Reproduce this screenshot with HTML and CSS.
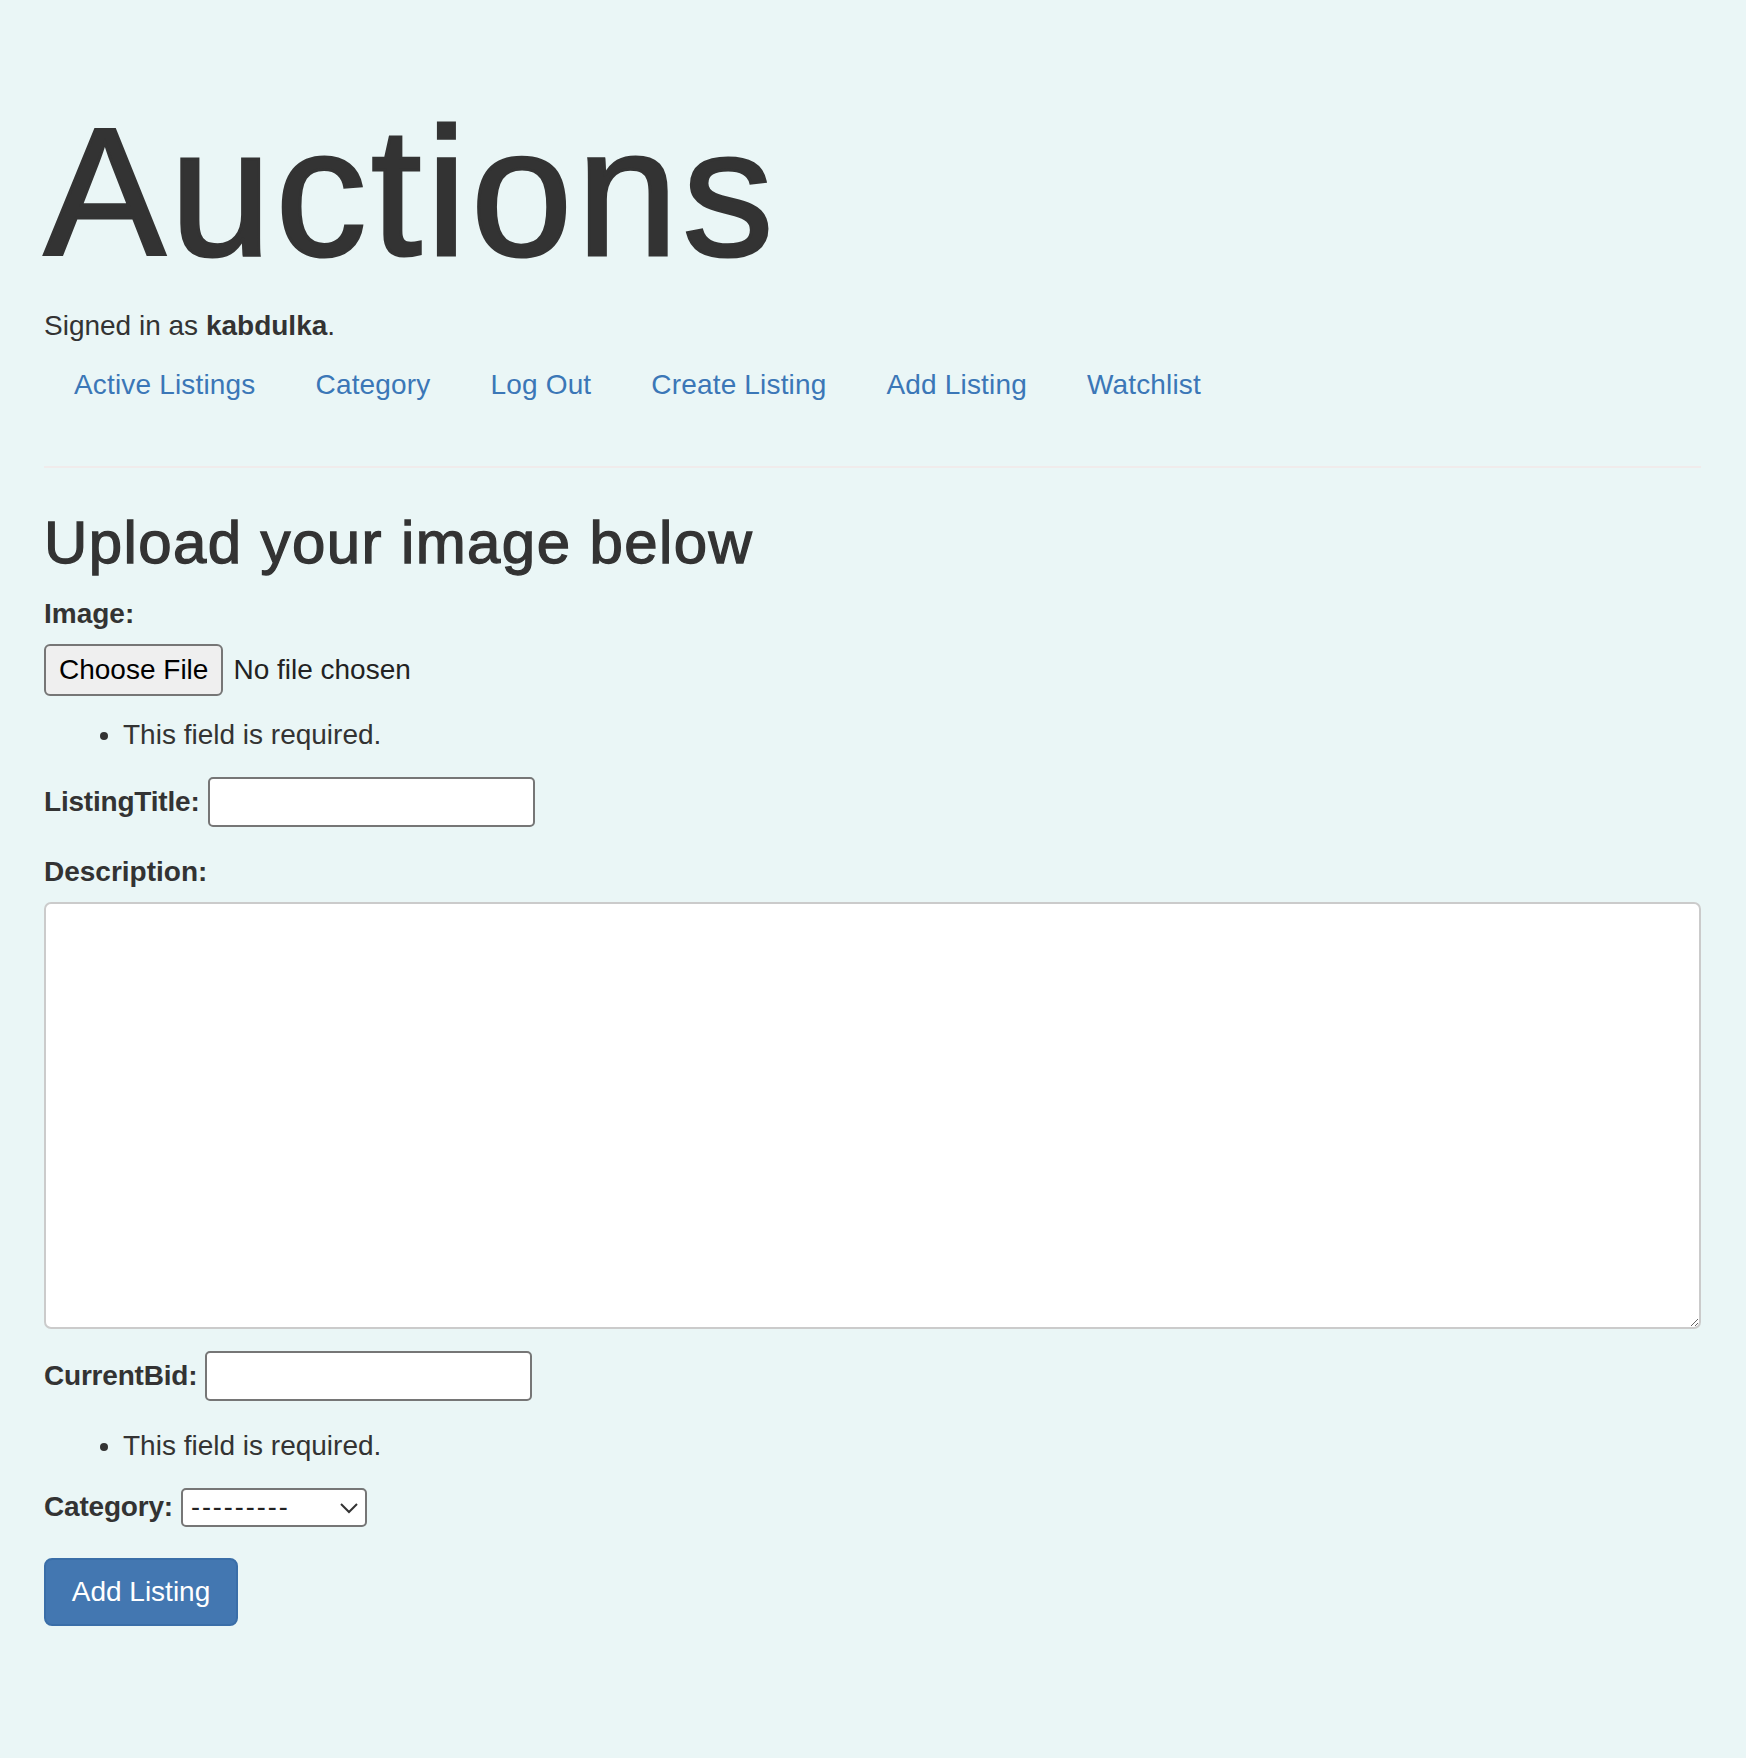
FILE: index.html
```html
<!DOCTYPE html>
<html lang="en">
<head>
<meta charset="utf-8">
<title>Auctions</title>
<link rel="stylesheet" href="styles.css">
</head>
<body>
<div class="page">
  <h1 class="title">Auctions</h1>
  <div class="signed">Signed in as <strong>kabdulka</strong>.</div>
  <ul class="nav">
    <li><a href="#">Active Listings</a></li>
    <li><a href="#">Category</a></li>
    <li><a href="#">Log Out</a></li>
    <li><a href="#">Create Listing</a></li>
    <li><a href="#">Add Listing</a></li>
    <li><a href="#">Watchlist</a></li>
  </ul>
  <hr class="rule">

  <h2 class="heading">Upload your image below</h2>
  <form class="form">
    <div class="label-line"><label class="lbl">Image:</label></div>
    <div class="file-row">
      <span class="file-btn">Choose File</span>
      <span class="file-text">No file chosen</span>
    </div>
    <ul class="errors errors-first"><li>This field is required.</li></ul>

    <div class="field field-title">
      <label class="lbl">ListingTitle:</label>
      <input class="text-input" type="text">
    </div>

    <div class="label-line label-desc"><label class="lbl">Description:</label></div>
    <textarea class="desc"></textarea>

    <div class="field field-bid">
      <label class="lbl">CurrentBid:</label>
      <input class="text-input" type="text">
    </div>
    <ul class="errors errors-second"><li>This field is required.</li></ul>

    <div class="field field-cat">
      <label class="lbl">Category:</label>
      <span class="select-wrap">
        <select class="select"><option>---------</option></select>
        <svg class="chevron" width="20" height="12" viewBox="0 0 20 12"><path d="M2 2 L10 10 L18 2" fill="none" stroke="#333" stroke-width="2"/></svg>
      </span>
    </div>

    <button class="submit" type="button">Add Listing</button>
  </form>
</div>
</body>
</html>
```

FILE: styles.css
```css
html {
  background: #eaf6f6;
}
body {
  margin: 0;
  background: #eaf6f6;
  color: #333;
  font-family: "Liberation Sans", Arial, Helvetica, sans-serif;
  font-size: 28px;
  line-height: 40px;
}
.page {
  padding: 92px 45px 120px 44px;
}
.title {
  margin: 0;
  font-size: 182px;
  line-height: 200px;
  font-weight: normal;
  letter-spacing: 4.5px;
  -webkit-text-stroke: 3px #333;
  color: #333;
}
.signed {
  margin-top: 14px;
}
.signed strong {
  font-weight: bold;
}
.nav {
  list-style: none;
  margin: 19px 0 0 0;
  padding: 0;
  display: flex;
}
.nav a {
  display: block;
  padding: 0 30px;
  color: #3b77b7;
  text-decoration: none;
  letter-spacing: 0.17px;
}
.rule {
  margin: 61px 0 0 0;
  border: 0;
  height: 2px;
  background: #f0ebeb;
}
.heading {
  margin: 42px 0 0 0;
  font-size: 60px;
  line-height: 66px;
  font-weight: normal;
  letter-spacing: 1.4px;
  -webkit-text-stroke: 1.3px #333;
}
.form {
  margin: 0;
}
.lbl {
  font-weight: bold;
}
.label-line {
  margin-top: 18px;
}
.file-row {
  margin-top: 10px;
  display: flex;
  align-items: center;
}
.file-btn {
  display: inline-block;
  box-sizing: border-box;
  height: 52px;
  line-height: 48px;
  padding: 0 13px;
  border: 2px solid #767676;
  border-radius: 6px;
  background: #efefef;
  color: #000;
}
.file-text {
  margin-left: 10px;
  color: #222;
}
.errors {
  margin: 0;
  padding-left: 79px;
  list-style: disc;
}
.errors-first {
  margin-top: 19px;
}
.errors-second {
  margin-top: 25px;
}
.field {
  display: flex;
  align-items: center;
  gap: 8px;
}
.field-title {
  margin-top: 22px;
}
.field-bid {
  margin-top: 22px;
}
.field-cat {
  margin-top: 21px;
}
.field .lbl {
  letter-spacing: -0.2px;
}
.text-input {
  box-sizing: border-box;
  width: 327px;
  height: 50px;
  border: 2px solid #767676;
  border-radius: 5px;
  background: #fff;
  margin: 0;
  font-size: 27px;
  font-family: inherit;
}
.label-desc {
  margin-top: 25px;
}
.desc {
  display: block;
  box-sizing: border-box;
  margin-top: 10px;
  width: 100%;
  height: 427px;
  border: 2px solid #cbcbcb;
  border-radius: 7px;
  background: #fff;
  resize: vertical;
  font-family: inherit;
  font-size: 28px;
}
.select-wrap {
  position: relative;
  display: inline-block;
}
.select {
  -webkit-appearance: none;
  appearance: none;
  box-sizing: border-box;
  width: 186px;
  height: 39px;
  border: 2px solid #767676;
  border-radius: 5px;
  background: #fff;
  padding: 0 0 0 8px;
  margin: 0;
  font-family: inherit;
  font-size: 27px;
  letter-spacing: 2px;
  color: #222;
  display: block;
}
.chevron {
  position: absolute;
  right: 8px;
  top: 14px;
  pointer-events: none;
}
.submit {
  display: block;
  margin-top: 31px;
  box-sizing: border-box;
  width: 194px;
  height: 68px;
  background: #4377b1;
  border: 2px solid #3a6ea8;
  border-radius: 8px;
  color: #fff;
  font-family: inherit;
  font-size: 28px;
  padding: 0;
}
```
